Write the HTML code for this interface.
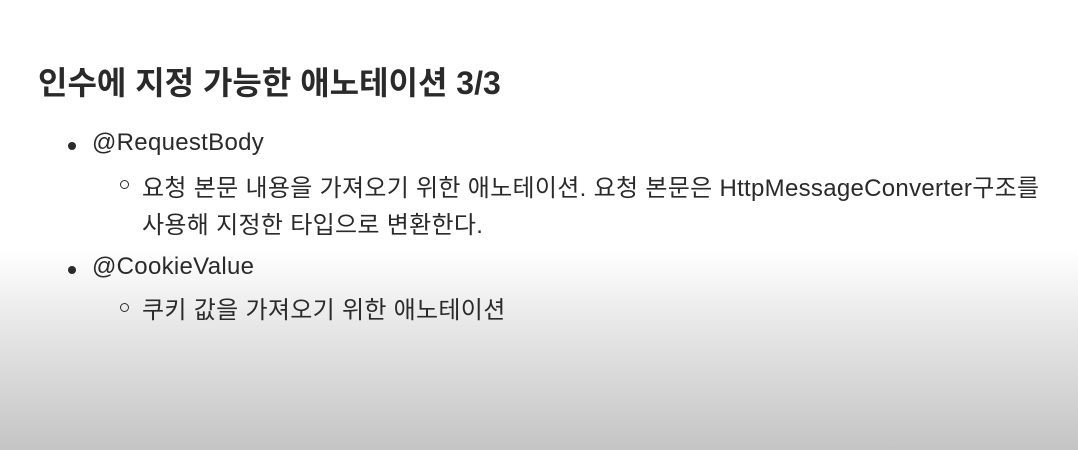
<!DOCTYPE html>
<html><head><meta charset="utf-8"><style>
html,body{margin:0;padding:0}
body{width:1078px;height:450px;overflow:hidden;position:relative;
background:linear-gradient(to bottom,#fff 0px,#fff 250px,#e6e6e6 330px,#d2d2d2 400px,#c4c4c4 450px);
font-family:"Liberation Sans","Noto Sans CJK KR",sans-serif;color:#222}
.t{position:absolute;left:38px;top:58px;font-size:32px;font-weight:bold;color:#2a2a2a;white-space:nowrap;letter-spacing:0px}
.l{position:absolute;font-size:24px;white-space:nowrap;color:#2a2a2a;letter-spacing:0.3px}
.d{position:absolute;width:8px;height:8px;border-radius:50%;background:#2a2a2a}
.c{position:absolute;width:7px;height:7px;border-radius:50%;border:1.3px solid #2a2a2a}
</style></head><body>
<div class="t">인수에 지정 가능한 애노테이션 3/3</div>
<div class="d" style="left:68px;top:142px"></div>
<div class="l" style="left:92px;top:129px">@RequestBody</div>
<div class="c" style="left:120px;top:180px"></div>
<div class="l" style="left:142px;top:168px">요청 본문 내용을 가져오기 위한 애노테이션. 요청 본문은 HttpMessageConverter구조를</div>
<div class="l" style="left:142px;top:205px">사용해 지정한 타입으로 변환한다.</div>
<div class="d" style="left:68px;top:266px"></div>
<div class="l" style="left:92px;top:253px">@CookieValue</div>
<div class="c" style="left:120px;top:303px"></div>
<div class="l" style="left:142px;top:290px">쿠키 값을 가져오기 위한 애노테이션</div>
</body></html>
